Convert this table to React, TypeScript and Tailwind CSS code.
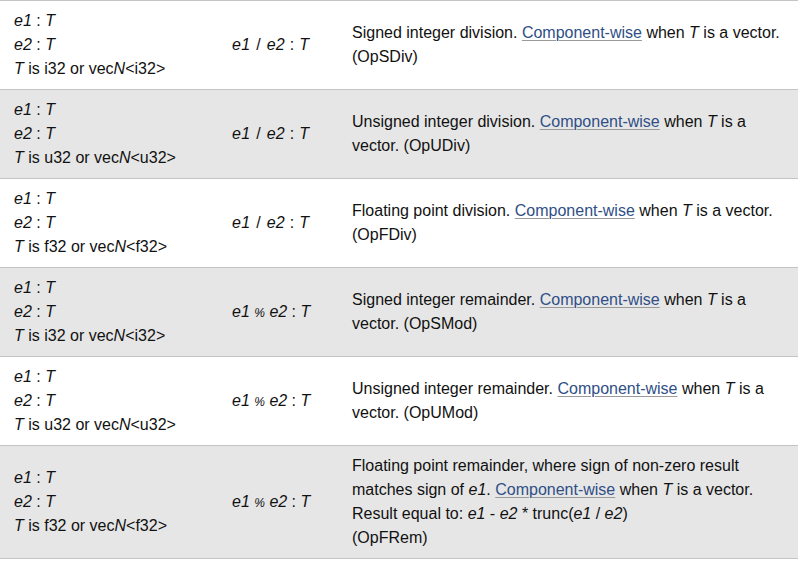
import React from "react";

type Row = {
  ty: string;
  op: "/" | "%";
  desc: React.ReactNode;
};

const V = ({ children }: { children: React.ReactNode }) => <i>{children}</i>;

const Link = ({ children }: { children: React.ReactNode }) => (
  <a className="text-[#2f4f86] underline decoration-[#9a9a9a] underline-offset-2 decoration-1">
    {children}
  </a>
);

const rows: Row[] = [
  {
    ty: "i32",
    op: "/",
    desc: (
      <>
        Signed integer division. <Link>Component-wise</Link> when <V>T</V> is a vector. (OpSDiv)
      </>
    ),
  },
  {
    ty: "u32",
    op: "/",
    desc: (
      <>
        Unsigned integer division. <Link>Component-wise</Link> when <V>T</V> is a vector. (OpUDiv)
      </>
    ),
  },
  {
    ty: "f32",
    op: "/",
    desc: (
      <>
        Floating point division. <Link>Component-wise</Link> when <V>T</V> is a vector. (OpFDiv)
      </>
    ),
  },
  {
    ty: "i32",
    op: "%",
    desc: (
      <>
        Signed integer remainder. <Link>Component-wise</Link> when <V>T</V> is a vector. (OpSMod)
      </>
    ),
  },
  {
    ty: "u32",
    op: "%",
    desc: (
      <>
        Unsigned integer remainder. <Link>Component-wise</Link> when <V>T</V> is a vector. (OpUMod)
      </>
    ),
  },
  {
    ty: "f32",
    op: "%",
    desc: (
      <>
        Floating point remainder, where sign of non-zero result matches sign of <V>e1</V>.{" "}
        <Link>Component-wise</Link> when <V>T</V> is a vector. Result equal to: <V>e1</V> - <V>e2</V> *
        trunc(<V>e1</V> / <V>e2</V>)
        <br />
        (OpFRem)
      </>
    ),
  },
];

export default function App() {
  return (
    <div
      className="w-[806px] h-[561px] bg-white text-[#111] text-[16px] leading-[24px]"
      style={{ fontFamily: '"Liberation Sans", Arial, sans-serif' }}
    >
      <div className="w-[798px] border-t border-[#c4c4c4]">
        {rows.map((r, i) => (
          <div
            key={i}
            className={`grid grid-cols-[232px_120px_1fr] items-center border-b border-[#c4c4c4] py-2 ${
              i % 2 === 1 || i === 5 ? "bg-[#e6e6e6]" : "bg-white"
            }`}
          >
            <div className="pl-[14px]">
              <div>
                <V>e1</V> : <V>T</V>
              </div>
              <div>
                <V>e2</V> : <V>T</V>
              </div>
              <div>
                <V>T</V> is {r.ty} or vec<V>N</V>&lt;{r.ty}&gt;
              </div>
            </div>
            {r.op === "%" ? (
              <div>
                <V>e1</V> <i className="text-[12px]">%</i> <V>e2</V> : <V>T</V>
              </div>
            ) : (
              <div className="tracking-[0.3px]">
                <V>e1</V> <span className="px-[1px]">/</span> <V>e2</V> : <V>T</V>
              </div>
            )}
            <div className="pr-[14px]">{r.desc}</div>
          </div>
        ))}
      </div>
    </div>
  );
}
